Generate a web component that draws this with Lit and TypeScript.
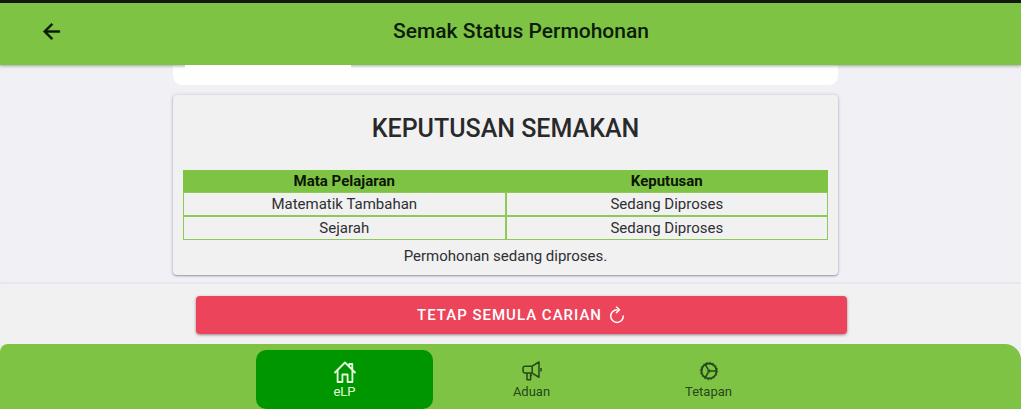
import { LitElement, html, css, svg } from "lit";
import { customElement, state } from "lit/decorators.js";

interface Row {
  subject: string;
  result: string;
}

const rows: Row[] = [
  { subject: "Matematik Tambahan", result: "Sedang Diproses" },
  { subject: "Sejarah", result: "Sedang Diproses" },
];

const homeIcon = svg`
  <path d="M1.500 13 12 2.500 22.500 13M4.600 10.500V22h4.800v-7.500h5.200V22h4.800V10.500M16.300 6.500V4h3v5.500" />`;

const megaphoneIcon = svg`
  <path d="M3.500 6.200h8.700v8.300H3.500a2.200 2.200 0 0 1-2.200-2.200V8.400a2.200 2.200 0 0 1 2.200-2.200zM12.200 6.200 20.400 1.200v18.300l-8.200-5M22.800 8.300v4.200M6 14.500V22.500h4.300V14.500M10.300 17.500h1.900" />`;

const settingsIcon = svg`
  <circle cx="12" cy="12" r="9" stroke-width="2.200" />
  <circle cx="12" cy="12" r="10.500" stroke-width="0.900" stroke-dasharray="2.061 2.062" />
  <circle cx="12" cy="12" r="1.300" stroke-width="1.600" />
  <path d="M13.800 12H21M11.100 10.400 7.500 4.200M11.100 13.600l-3.600 6.200" />`;

const tabs = [
  { id: "elp", label: "eLP", icon: homeIcon },
  { id: "aduan", label: "Aduan", icon: megaphoneIcon },
  { id: "tetapan", label: "Tetapan", icon: settingsIcon },
];

@customElement("app-root")
export class AppRoot extends LitElement {
  @state() private active = "elp";

  static styles = css`
    :host {
      display: block;
      background: #fff;
      font-family: Roboto, "Liberation Sans", sans-serif;
      color: #2f2f33;
    }
    .app {
      display: flex;
      flex-direction: column;
      min-height: 100vh;
      box-sizing: border-box;
      border-right: 3px solid #fff;
      background: #f0f0f5;
      overflow: hidden;
    }
    .header {
      display: grid;
      grid-template-columns: 1fr auto 1fr;
      align-items: center;
      height: 65px;
      padding: 0 0 6px 21px;
      box-sizing: border-box;
      border-top: 3px solid #121a10;
      background: #7fc344;
      box-shadow: 0 1px 3px rgba(60, 90, 60, 0.5);
      z-index: 1;
    }
    .back {
      justify-self: start;
      display: flex;
      margin: 0 0 0 18px;
      padding: 0;
      border: 0;
      background: none;
      color: #071a05;
    }
    .back svg {
      width: 25px;
      height: 25px;
      fill: currentColor;
      stroke: currentColor;
      stroke-width: 0.4;
    }
    .title {
      margin: 0;
      font-size: 21px;
      line-height: 24px;
      font-weight: 500;
      color: #0b1c08;
    }
    .content {
      flex: 1;
      display: flex;
      flex-direction: column;
      gap: 10px;
      padding: 0 183px 9px 173px;
      box-shadow: inset 0 -2px 1px #e6e6ed;
    }
    .previous {
      height: 20px;
      border-radius: 0 0 9px 9px;
      background: #fff;
    }
    .sheet {
      position: relative;
      z-index: 2;
      width: 25%;
      height: 5px;
      margin-left: 12px;
      background: #fff;
    }
    .card {
      padding: 18px 10px 8px;
      border-radius: 4px;
      background: #f1f1f1;
      box-shadow: 0 1px 2px rgba(40, 40, 60, 0.4), 0 0 4px rgba(40, 40, 90, 0.14);
      text-align: center;
    }
    .heading {
      margin: 0 0 25px;
      font-size: 25px;
      line-height: 32px;
      font-weight: 500;
      color: #29292b;
    }
    .results {
      width: 100%;
      table-layout: fixed;
      border-collapse: separate;
      border-spacing: 0;
      font-size: 15px;
    }
    .results th,
    .results td {
      padding: 0;
      border: 1px solid #8cc957;
      line-height: 22px;
    }
    .results th {
      border-color: #7fc344;
      background: #7fc344;
      color: #0b1606;
      font-weight: 700;
      line-height: 20px;
    }
    .note {
      margin: 5px 0 0;
      font-size: 15px;
      line-height: 22px;
    }
    .actions {
      padding: 12px 174px 10px 196px;
      background: #f1f1f1;
    }
    .reset {
      display: flex;
      align-items: center;
      justify-content: center;
      gap: 6px;
      width: 100%;
      height: 38px;
      border: 0;
      border-radius: 4px;
      background: #ec445a;
      color: #fff;
      font: 500 15px/20px Roboto, "Liberation Sans", sans-serif;
      letter-spacing: 1px;
      box-shadow: 0 1px 3px rgba(60, 20, 30, 0.5);
    }
    .reset svg {
      width: 18px;
      height: 18px;
      fill: none;
      stroke: currentColor;
      stroke-width: 1.5;
      stroke-linecap: round;
      stroke-linejoin: round;
    }
    .tabs {
      display: flex;
      justify-content: center;
      padding: 6px 0 0 32px;
      border-radius: 8px 16px 0 0;
      background: #7fc344;
    }
    .tab {
      display: flex;
      flex-direction: column;
      align-items: center;
      width: 177px;
      padding: 10px 0 9px;
      border: 0;
      border-radius: 10px;
      background: none;
      color: #25471a;
      font: 400 13px/16px Roboto, "Liberation Sans", sans-serif;
    }
    .tab svg {
      width: 24px;
      height: 24px;
      fill: none;
      stroke: currentColor;
      stroke-width: 1.8;
      stroke-linejoin: round;
    }
    .tab.small svg {
      width: 20px;
      height: 20px;
      padding: 1px 0 3px;
    }
    .tab.active {
      margin-right: 10px;
      background: #009600;
      color: #e6ffdf;
    }
  `;

  render() {
    return html`
      <div class="app">
        <header class="header">
          <button class="back" aria-label="Kembali">
            <svg viewBox="0 0 24 24">
              <path d="M20 11H7.830l5.590-5.590L12 4l-8 8 8 8 1.410-1.410L7.830 13H20v-2z" />
            </svg>
          </button>
          <h1 class="title">Semak Status Permohonan</h1>
        </header>
        <main class="content">
          <div class="previous"><div class="sheet"></div></div>
          <section class="card">
            <h2 class="heading">KEPUTUSAN SEMAKAN</h2>
            <table class="results">
              <thead>
                <tr>
                  <th scope="col">Mata Pelajaran</th>
                  <th scope="col">Keputusan</th>
                </tr>
              </thead>
              <tbody>
                ${rows.map((r) => html`<tr><td>${r.subject}</td><td>${r.result}</td></tr>`)}
              </tbody>
            </table>
            <p class="note">Permohonan sedang diproses.</p>
          </section>
        </main>
        <div class="actions">
          <button class="reset">
            TETAP SEMULA CARIAN
            <svg viewBox="0 0 18 18" aria-hidden="true">
              <path d="M9 3.800A6.300 6.300 0 1 0 15.300 10M8.500 1l3 2.800-3 2.800" />
            </svg>
          </button>
        </div>
        <nav class="tabs">
          ${tabs.map(
            (t) => html`<button
              class="tab ${t.id === this.active ? "active" : ""} ${t.id === "elp" ? "" : "small"}"
              @click=${() => (this.active = t.id)}
            >
              <svg viewBox="0 0 24 24" aria-hidden="true">${t.icon}</svg>
              ${t.label}
            </button>`
          )}
        </nav>
      </div>
    `;
  }
}
